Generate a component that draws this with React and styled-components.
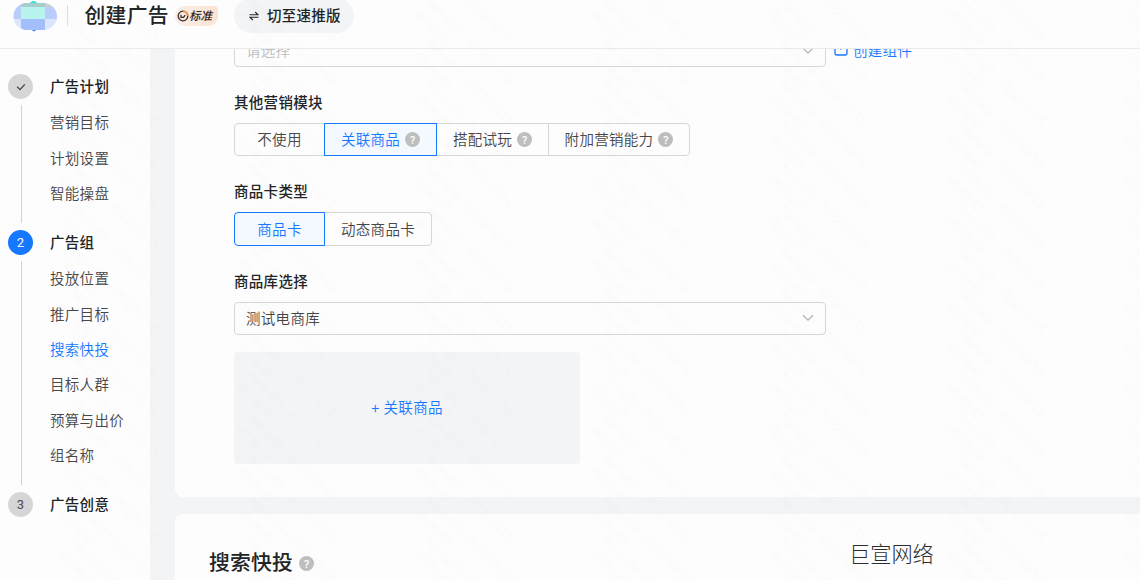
import React, { useState } from "react";
import styled, { createGlobalStyle } from "styled-components";

const steps = [
  { title: "广告计划", done: true, items: ["营销目标", "计划设置", "智能操盘"] },
  {
    title: "广告组",
    current: true,
    items: ["投放位置", "推广目标", "搜索快投", "目标人群", "预算与出价", "组名称"],
  },
  { title: "广告创意", items: [] },
];

const modules = [
  { label: "不使用", width: 91 },
  { label: "关联商品", width: 113, help: true },
  { label: "搭配试玩", width: 113, help: true },
  { label: "附加营销能力", width: 142, help: true },
];

const cardTypes = [
  { label: "商品卡", width: 91 },
  { label: "动态商品卡", width: 108 },
];

const Chevron = () => (
  <svg width="12" height="8" viewBox="0 0 12 8" fill="none">
    <path d="M1 1.200L6 6.200L11 1.200" stroke="#b4b5b7" strokeWidth="1.300" />
  </svg>
);

const Logo = () => (
  <svg width="44" height="32" viewBox="0 0 44 32">
    <defs>
      <clipPath id="logoClip">
        <path d="M12 3H32C40 5 44 10 44 16.500C44 23 40 28 32 30H12C4 28 0.500 23 0.500 16.500C0.500 10 4 5 12 3Z" />
      </clipPath>
    </defs>
    <path d="M15 4L19.500 1H21.500L26 4Z" fill="#2fe3dc" />
    <path d="M18 29.500h6l-3 2z" fill="#3f7cf5" />
    <g clipPath="url(#logoClip)">
      <rect width="44" height="20" fill="#bacdfa" />
      <rect y="19" width="44" height="13" fill="#dbe6fd" />
      <rect x="8" width="24" height="7" fill="#a4cdcb" />
      <rect x="32" width="12" height="7" fill="#cfcdcf" />
      <rect x="8" y="7" width="24" height="12" fill="#b9f3ee" />
      <rect x="8" y="19" width="24" height="12" fill="#a3bffb" />
    </g>
  </svg>
);

const Watermark = () => (
  <WatermarkSvg>
    <defs>
      <pattern id="mark" width="177.300" height="41.600" patternUnits="userSpaceOnUse">
        {[-3, -2, -1, 0, 1].map((row) => (
          <g key={row} transform={`translate(0 ${row * 41.6})`}>
            <text transform="translate(71 43.500) rotate(45)">hanrui03 - 2022/10/15</text>
            <text transform="translate(60 15) rotate(45)">00:36:47</text>
          </g>
        ))}
      </pattern>
    </defs>
    <rect width="100%" height="100%" fill="url(#mark)" />
  </WatermarkSvg>
);

const RadioGroup = ({ options, value, onChange }) => (
  <Group>
    {options.map((item) => (
      <Option
        key={item.label}
        $width={item.width}
        $active={item.label === value}
        onClick={() => onChange(item.label)}
      >
        {item.label}
        {item.help && <Help>?</Help>}
      </Option>
    ))}
  </Group>
);

const App = () => {
  const [menu, setMenu] = useState("搜索快投");
  const [module, setModule] = useState("关联商品");
  const [cardType, setCardType] = useState("商品卡");

  return (
    <Page>
      <GlobalStyle />
      <Header>
        <HeaderRow>
          <Logo />
          <Divider />
          <PageTitle>创建广告</PageTitle>
          <Badge>
            <svg width="12" height="12" viewBox="0 0 12 12" fill="none">
              <circle cx="6" cy="6" r="4.800" stroke="#3a2a22" strokeWidth="1.300" />
              <path d="M6 1.200A4.800 4.800 0 0 1 10.800 6" stroke="#ec9a50" strokeWidth="2" />
              <path d="M4 4.800V7.400H6.600L8.200 5" stroke="#3a2a22" strokeWidth="1.300" />
            </svg>
            <BadgeText>标准</BadgeText>
          </Badge>
          <SwitchBtn>
            <svg width="10" height="10" viewBox="0 0 10 10" fill="none">
              <path
                d="M0.500 3.800H9L6.200 1M9.500 6.200H1L3.800 9"
                stroke="#222426"
                strokeWidth="1.100"
              />
            </svg>
            <span>切至速推版</span>
          </SwitchBtn>
        </HeaderRow>
      </Header>

      <Body>
        <Sidebar>
          {steps.map((step, i) => (
            <Step key={step.title}>
              <Rail>
                <Circle $current={step.current}>
                  {step.done ? (
                    <svg width="10" height="8" viewBox="0 0 10 8" fill="none">
                      <path d="M1.200 3.800L4 6.600L8.800 1.400" stroke="#444" strokeWidth="1.300" />
                    </svg>
                  ) : (
                    i + 1
                  )}
                </Circle>
                {step.items.length > 0 && <Line />}
              </Rail>
              <div>
                <StepTitle>{step.title}</StepTitle>
                {step.items.length > 0 && (
                  <Menu>
                    {step.items.map((item) => (
                      <MenuItem
                        key={item}
                        $active={item === menu}
                        onClick={() => setMenu(item)}
                      >
                        {item}
                      </MenuItem>
                    ))}
                  </Menu>
                )}
              </div>
            </Step>
          ))}
        </Sidebar>

        <Content>
          <FormCard>
            <ScrolledRow>
              <Select $placeholder>
                请选择
                <Chevron />
              </Select>
              <CreateLink>
                <svg width="14" height="14" viewBox="0 0 14 14" fill="none">
                  <path
                    d="M6 1H3Q1 1 1 3V11Q1 13 3 13H11Q13 13 13 11V7M6.500 7.500L12.500 1.500M8.500 1H13V5.500"
                    stroke="#1677ff"
                    strokeWidth="1.300"
                  />
                </svg>
                创建组件
              </CreateLink>
            </ScrolledRow>

            <Label>其他营销模块</Label>
            <RadioGroup options={modules} value={module} onChange={setModule} />

            <Label>商品卡类型</Label>
            <RadioGroup options={cardTypes} value={cardType} onChange={setCardType} />

            <Label>商品库选择</Label>
            <Select>
              测试电商库
              <Chevron />
            </Select>
            <AddBox>
              <Plus>+</Plus>
              关联商品
            </AddBox>
          </FormCard>

          <SearchCard>
            <SectionTitle>
              搜索快投
              <Help $large>?</Help>
            </SectionTitle>
            <Company>巨宣网络</Company>
          </SearchCard>
        </Content>
      </Body>
      <Watermark />
    </Page>
  );
};

const GlobalStyle = createGlobalStyle`
  * {
    box-sizing: border-box;
  }
  body {
    margin: 0;
    overflow: hidden;
    font-family: "Noto Sans CJK SC", sans-serif;
    font-size: 14.5px;
    font-weight: 350;
    letter-spacing: 0.3px;
    color: #46474a;
  }
  svg {
    flex-shrink: 0;
  }
`;

const Page = styled.div`
  position: relative;
  display: flex;
  flex-direction: column;
  width: 1140px;
  height: 580px;
  overflow: hidden;
  background: #f2f4f6;
`;

const Header = styled.header`
  flex: none;
  height: 49px;
  background: #fdfdfd;
  border-bottom: 1px solid #ebebec;
`;

const HeaderRow = styled.div`
  display: flex;
  align-items: center;
  height: 31px;
  padding-left: 13px;
`;

const Divider = styled.div`
  width: 1px;
  height: 21px;
  margin-left: 10px;
  background: #dcdddf;
`;

const PageTitle = styled.h1`
  margin: 0 0 2px 16.5px;
  font-size: 20.8px;
  font-weight: 500;
  letter-spacing: 0.3px;
  line-height: 29px;
  color: #222426;
`;

const Badge = styled.div`
  display: flex;
  align-items: center;
  width: 43px;
  height: 20px;
  margin-left: 6px;
  padding-left: 2px;
  border-radius: 10px 4px 10px 10px;
  background: linear-gradient(90deg, #f8eee8, #fce3d2);
`;

const BadgeText = styled.span`
  padding-bottom: 2px;
  font-size: 11.5px;
  font-weight: 500;
  font-style: italic;
  letter-spacing: 0;
  line-height: 18px;
  color: #33241d;
`;

const SwitchBtn = styled.button`
  display: flex;
  align-items: center;
  flex: none;
  gap: 8px;
  width: 120px;
  height: 35px;
  margin-left: 16px;
  padding: 0 0 0 15px;
  border: none;
  border-radius: 18px;
  background: #f2f4f6;
  font: inherit;
  font-weight: 500;
  letter-spacing: inherit;
  white-space: nowrap;
  color: #222426;

  span {
    padding-bottom: 2px;
  }
`;

const Body = styled.div`
  display: flex;
  flex: 1;
  min-height: 0;
`;

const Sidebar = styled.aside`
  flex: none;
  width: 150px;
  padding: 25px 0 0 8px;
  background: #fdfdfd;
`;

const Step = styled.div`
  display: flex;
  gap: 17px;
`;

const Rail = styled.div`
  display: flex;
  flex-direction: column;
  align-items: center;
  width: 25px;
`;

const Circle = styled.div`
  display: flex;
  align-items: center;
  justify-content: center;
  flex: none;
  width: 25px;
  height: 25px;
  border-radius: 50%;
  background: ${({ $current }) => ($current ? "#1677ff" : "#d6d6d6")};
  color: ${({ $current }) => ($current ? "#fff" : "#4b4c4e")};
  font-family: Roboto, sans-serif;
  font-size: 13px;
  font-weight: 400;
  letter-spacing: 0;
`;

const Line = styled.div`
  flex: 1;
  width: 1px;
  margin: 6px 0 7px 2px;
  background: #d2d3d4;
`;

const StepTitle = styled.div`
  height: 25px;
  line-height: 23px;
  font-weight: 500;
  color: #222426;
`;

const Menu = styled.div`
  padding: 6.3px 0 18.4px;
`;

const MenuItem = styled.div`
  height: 35.4px;
  line-height: 34.6px;
  color: ${({ $active }) => ($active ? "#1677ff" : "inherit")};
  cursor: pointer;
`;

const Content = styled.main`
  display: flex;
  flex-direction: column;
  gap: 17px;
  flex: 1;
  padding-left: 25px;
`;

const FormCard = styled.section`
  flex: none;
  height: 448px;
  padding-left: 59px;
  border-radius: 0 0 0 8px;
  background: #fdfdfd;
`;

/* partly hidden under the header, only the bottom of the row is visible */
const ScrolledRow = styled.div`
  display: flex;
  align-items: flex-end;
  gap: 8px;
  height: 18px;
  overflow: hidden;
`;

const Select = styled.div`
  display: flex;
  align-items: center;
  justify-content: space-between;
  flex: none;
  width: 592px;
  height: 33px;
  padding: 0 11px 2px;
  border: 1px solid #d6d7d9;
  border-radius: 4px;
  color: ${({ $placeholder }) => ($placeholder ? "#bcbdbf" : "inherit")};

  svg {
    margin-top: 2px;
  }
`;

const CreateLink = styled.a`
  display: flex;
  align-items: center;
  gap: 5px;
  height: 33px;
  padding-bottom: 3px;
  color: #1677ff;
`;

const Label = styled.div`
  height: 56px;
  padding-top: 24px;
  line-height: 22px;
  font-weight: 500;
  color: #222426;
`;

const Group = styled.div`
  display: flex;
  height: 33.4px;
`;

const Option = styled.div`
  display: flex;
  align-items: center;
  justify-content: center;
  gap: 5px;
  position: relative;
  z-index: ${({ $active }) => ($active ? 1 : 0)};
  width: ${({ $width }) => $width}px;
  padding-bottom: 2px;
  border: 1px solid ${({ $active }) => ($active ? "#1677ff" : "#d6d7d9")};
  background: ${({ $active }) => ($active ? "#f4f9ff" : "transparent")};
  color: ${({ $active }) => ($active ? "#1677ff" : "inherit")};
  cursor: pointer;

  &:first-child {
    border-radius: 4px 0 0 4px;
  }
  &:last-child {
    border-radius: 0 4px 4px 0;
  }
  & + & {
    margin-left: -1px;
  }
`;

const Help = styled.span`
  display: flex;
  align-items: center;
  justify-content: center;
  width: 15px;
  height: 15px;
  margin-top: ${({ $large }) => ($large ? 5 : 2)}px;
  padding-top: 1px;
  border-radius: 50%;
  background: #bebebe;
  color: #fdfdfd;
  font-family: Roboto, sans-serif;
  font-size: 11.5px;
  font-weight: 500;
  letter-spacing: 0;
  line-height: 14px;
`;

const AddBox = styled.div`
  display: flex;
  align-items: center;
  justify-content: center;
  gap: 4px;
  width: 346px;
  height: 112px;
  margin-top: 17px;
  padding-bottom: 2px;
  border-radius: 4px;
  background: #f2f4f6;
  color: #1677ff;
`;

const Plus = styled.span`
  padding-top: 1px;
`;

const SearchCard = styled.section`
  display: flex;
  flex: 1;
  padding: 31px 0 0 34px;
  border-radius: 8px 0 0 0;
  background: #fdfdfd;
`;

const SectionTitle = styled.h2`
  display: flex;
  align-items: center;
  gap: 6px;
  width: 640px;
  height: 31px;
  margin: 0;
  font-size: 20.8px;
  font-weight: 500;
  letter-spacing: 0.2px;
  color: #222426;
`;

const Company = styled.div`
  margin-top: -8.5px;
  font-size: 21.2px;
  font-weight: 300;
  letter-spacing: 0;
  line-height: 31px;
  color: #2c2d2f;
`;

const WatermarkSvg = styled.svg`
  position: absolute;
  inset: 0;
  width: 100%;
  height: 100%;
  pointer-events: none;
  opacity: 0.014;
  font-family: Roboto, sans-serif;
  font-size: 11.2px;
  font-weight: 300;
`;

export default App;
